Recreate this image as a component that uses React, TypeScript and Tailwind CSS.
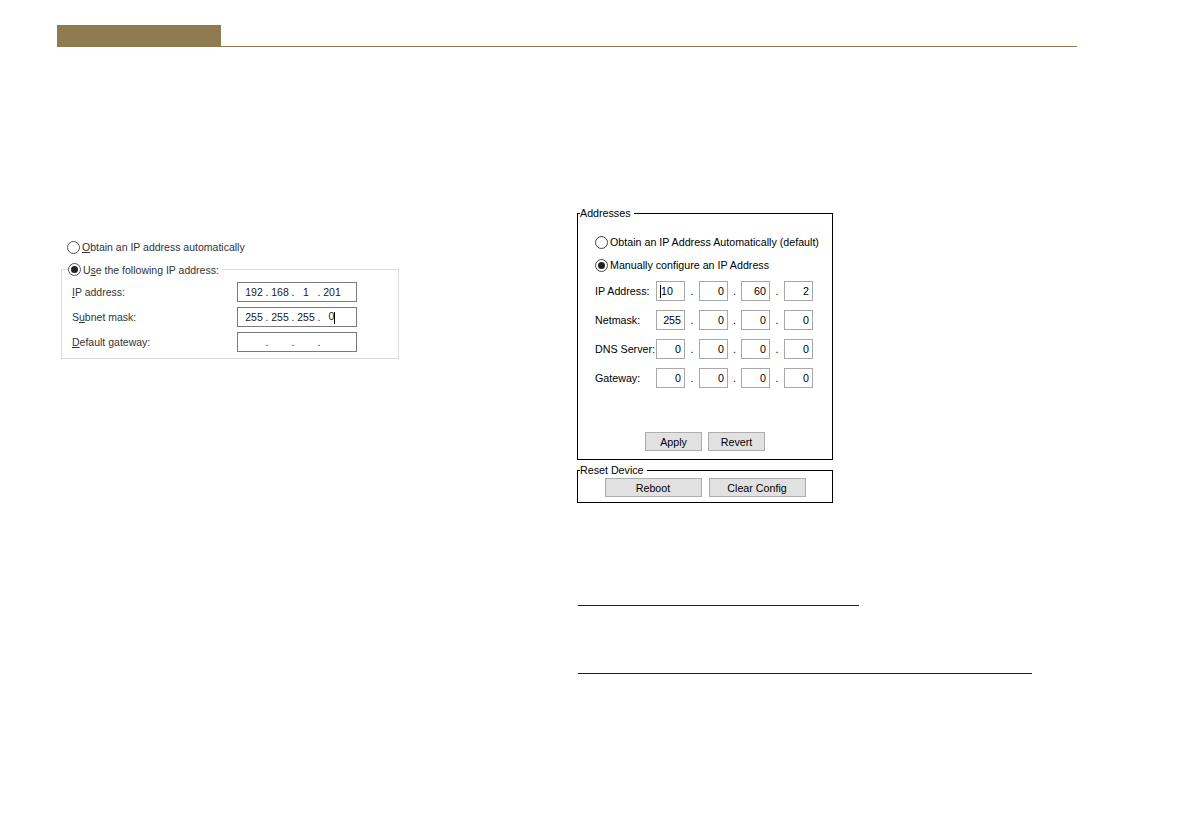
import React from 'react';

const Radio: React.FC<{ checked?: boolean; ring?: string }> = ({ checked, ring = 'border-[#333]' }) => (
  <span className={`w-[13px] h-[13px] rounded-full border ${ring} bg-white flex items-center justify-center shrink-0`}>
    {checked && <span className="w-[7px] h-[7px] rounded-full bg-[#222]" />}
  </span>
);

const winRows = [
  { label: <><u>I</u>P address:</>, parts: ['192', '168', '1', '201'] },
  { label: <>S<u>u</u>bnet mask:</>, parts: ['255', '255', '255', '0'], caret: true },
  { label: <><u>D</u>efault gateway:</>, parts: ['', '', '', ''] },
];

const devRows = [
  { label: 'IP Address:', parts: ['10', '0', '60', '2'], caret: true },
  { label: 'Netmask:', parts: ['255', '0', '0', '0'] },
  { label: 'DNS Server:', parts: ['0', '0', '0', '0'] },
  { label: 'Gateway:', parts: ['0', '0', '0', '0'] },
];

const dotWidths = ['w-[14px]', 'w-[13px]', 'w-[14px]'];

const App: React.FC = () => {
  return (
    <div className="w-[1192px] h-[840px] overflow-hidden bg-white font-['Liberation_Sans',Arial,sans-serif]">
      {/* header rule */}
      <header className="ml-[57px] mt-[25px] w-[1020px] flex items-end">
        <div className="w-[164px] h-[22px] bg-[#8f7b4f]" />
        <div className="flex-1 h-px bg-[#8f7b4f]" />
      </header>

      <div className="flex items-start">
        {/* Windows TCP/IP dialog fragment */}
        <div className="ml-[61px] mt-[193px] w-[516px] shrink-0 text-[10.5px] leading-[14px] text-[#333]">
          <div className="flex items-center h-[14px] pl-[6px] gap-[2px]">
            <Radio ring="border-[#555]" />
            <span><u>O</u>btain an IP address automatically</span>
          </div>
          <fieldset className="mt-[8px] w-[338px] border border-[#dcdcdc] pt-[5px] pb-[6px]">
            <legend className="ml-[6px] pr-[3px]">
              <span className="inline-flex items-center gap-[2px] h-[14px]">
                <Radio checked ring="border-[#555]" />
                <span>U<u>s</u>e the following IP address:</span>
              </span>
            </legend>
            <div className="flex flex-col gap-[5px]">
              {winRows.map((r, i) => (
                <div key={i} className="flex items-center h-[20px] pl-[10px]">
                  <span className="w-[165px]">{r.label}</span>
                  <div className="w-[120px] h-[20px] border border-[#7a7a7a] flex items-center pl-[6px] text-[#222]">
                    {r.parts.map((p, j) => (
                      <React.Fragment key={j}>
                        <span className="w-[20px] text-center">
                          {p}
                          {r.caret && j === 3 && <span className="inline-block w-px h-[12px] bg-black align-middle" />}
                        </span>
                        {j < 3 && <span className="w-[6px] text-center">.</span>}
                      </React.Fragment>
                    ))}
                  </div>
                </div>
              ))}
            </div>
          </fieldset>
        </div>

        {/* device web config */}
        <div className="mt-[159px] w-[256px] shrink-0 text-[10.7px] leading-[14px] text-black">
          <fieldset className="border border-black pt-[15px] pb-[8px]">
            <legend className="ml-[2px] pr-[3px] h-[14px]">Addresses</legend>
            <div className="pl-[17px]">
              <div className="flex items-center gap-[2px] h-[14px] whitespace-nowrap">
                <Radio ring="border-[#444]" />
                <span>Obtain an IP Address Automatically (default)</span>
              </div>
              <div className="mt-[9px] flex items-center gap-[2px] h-[14px] whitespace-nowrap">
                <Radio checked ring="border-[#444]" />
                <span>Manually configure an IP Address</span>
              </div>
              <div className="mt-[9px] flex flex-col gap-[9px]">
                {devRows.map((r, i) => (
                  <div key={i} className="flex items-center h-[20px]">
                    <span className="w-[61px] shrink-0 whitespace-nowrap">{r.label}</span>
                    {r.parts.map((p, j) => (
                      <React.Fragment key={j}>
                        {r.caret && j === 0 ? (
                          <div className="w-[29px] h-[20px] shrink-0 border border-[#a8a8a8] flex items-center pl-[3px]">
                            <span className="w-px h-[13px] bg-black" />
                            <span>{p}</span>
                          </div>
                        ) : (
                          <div className="w-[29px] h-[20px] shrink-0 border border-[#a8a8a8] flex items-center justify-end pr-[3px]">
                            {p}
                          </div>
                        )}
                        {j < 3 && <span className={`${dotWidths[j]} shrink-0 text-center`}>.</span>}
                      </React.Fragment>
                    ))}
                  </div>
                ))}
              </div>
            </div>
            <div className="mt-[44px] flex justify-center gap-[6px]">
              <button className="w-[57px] h-[19px] bg-[#e1e1e1] border border-[#adadad]">Apply</button>
              <button className="w-[57px] h-[19px] bg-[#e1e1e1] border border-[#adadad]">Revert</button>
            </div>
          </fieldset>

          <fieldset className="mt-[3px] border border-black pt-[1px] pb-[5px]">
            <legend className="ml-[2px] pr-[3px] h-[14px]">Reset Device</legend>
            <div className="flex justify-center gap-[7px]">
              <button className="w-[97px] h-[19px] bg-[#e1e1e1] border border-[#adadad]">Reboot</button>
              <button className="w-[97px] h-[19px] bg-[#e1e1e1] border border-[#adadad]">Clear Config</button>
            </div>
          </fieldset>

          {/* link underlines */}
          <div className="ml-[1px] mt-[102px] w-[281px] h-px bg-[#0000ff]" />
          <div className="ml-[1px] mt-[67px] w-[454px] h-px bg-[#0000ff]" />
        </div>
      </div>
    </div>
  );
};

export default App;
